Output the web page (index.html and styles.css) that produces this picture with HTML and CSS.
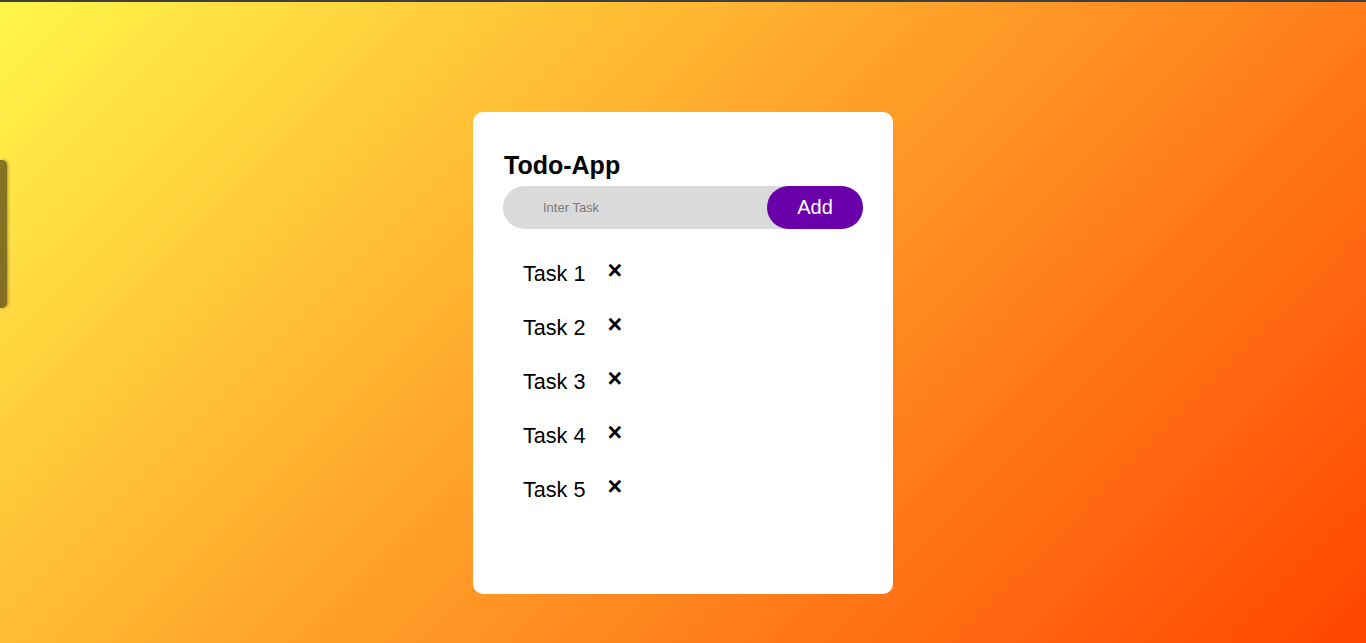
FILE: index.html
```html
<!DOCTYPE html>
<html lang="en">
<head>
<meta charset="UTF-8">
<title>Todo-App</title>
<link rel="stylesheet" href="styles.css">
</head>
<body>
<div class="topbar"></div>
<div class="side-tab"></div>
<main class="page">
  <section class="todo-app">
    <h2 class="title">Todo-App</h2>
    <div class="row">
      <input class="task-input" type="text" placeholder="Inter Task">
      <button class="add-btn">Add</button>
    </div>
    <ul class="tasks">
      <li class="task"><span class="task-text">Task 1</span><span class="remove">&times;</span></li>
      <li class="task"><span class="task-text">Task 2</span><span class="remove">&times;</span></li>
      <li class="task"><span class="task-text">Task 3</span><span class="remove">&times;</span></li>
      <li class="task"><span class="task-text">Task 4</span><span class="remove">&times;</span></li>
      <li class="task"><span class="task-text">Task 5</span><span class="remove">&times;</span></li>
    </ul>
  </section>
</main>
</body>
</html>
```
FILE: styles.css
```css
* { box-sizing: border-box; }
html, body { margin: 0; padding: 0; }
body {
  font-family: "Liberation Sans", Arial, sans-serif;
  min-height: 100vh;
  background: linear-gradient(135deg, #fff64a 0%, #ff9c28 50%, #ff4500 100%);
  overflow: hidden;
}
.topbar {
  height: 2px;
  background: #3f3f3f;
}
.side-tab {
  position: absolute;
  left: 0;
  top: 160px;
  width: 7px;
  height: 148px;
  background: rgba(50, 40, 15, 0.6);
  border-radius: 0 5px 5px 0;
  box-shadow: 1px 0 3px rgba(0,0,0,0.35);
}
.page {
  display: flex;
  justify-content: center;
  padding-top: 110px;
}
.todo-app {
  width: 420px;
  height: 482px;
  background: #fff;
  border-radius: 10px;
  padding: 40px 30px 30px;
}
.title {
  margin: 0 0 7px 1px;
  font-size: 25px;
  font-weight: bold;
  color: #000;
  line-height: 27px;
}
.row {
  display: flex;
  align-items: stretch;
  height: 43px;
  background: #dadada;
  border-radius: 22px;
}
.task-input {
  flex: 1;
  min-width: 0;
  border: none;
  outline: none;
  background: transparent;
  padding: 0 0 0 40px;
  font-family: "Liberation Sans", Arial, sans-serif;
  font-size: 13px;
  color: #333;
}
.task-input::placeholder { color: #7a7a7a; }
.add-btn {
  width: 96px;
  border: none;
  border-radius: 22px;
  background: #6a00aa;
  color: #fff;
  font-family: "Liberation Sans", Arial, sans-serif;
  font-size: 20px;
  padding: 0 0 1px;
  cursor: pointer;
}
.tasks {
  list-style: none;
  margin: 18px 0 0;
  padding: 0 0 0 20px;
}
.task {
  display: flex;
  align-items: flex-start;
  padding: 15px 0;
  font-size: 21.6px;
  line-height: 24px;
  color: #000;
}
.remove {
  margin-left: 22px;
  font-size: 25px;
  font-weight: bold;
  line-height: 16px;
  color: #000;
  cursor: pointer;
}
```
